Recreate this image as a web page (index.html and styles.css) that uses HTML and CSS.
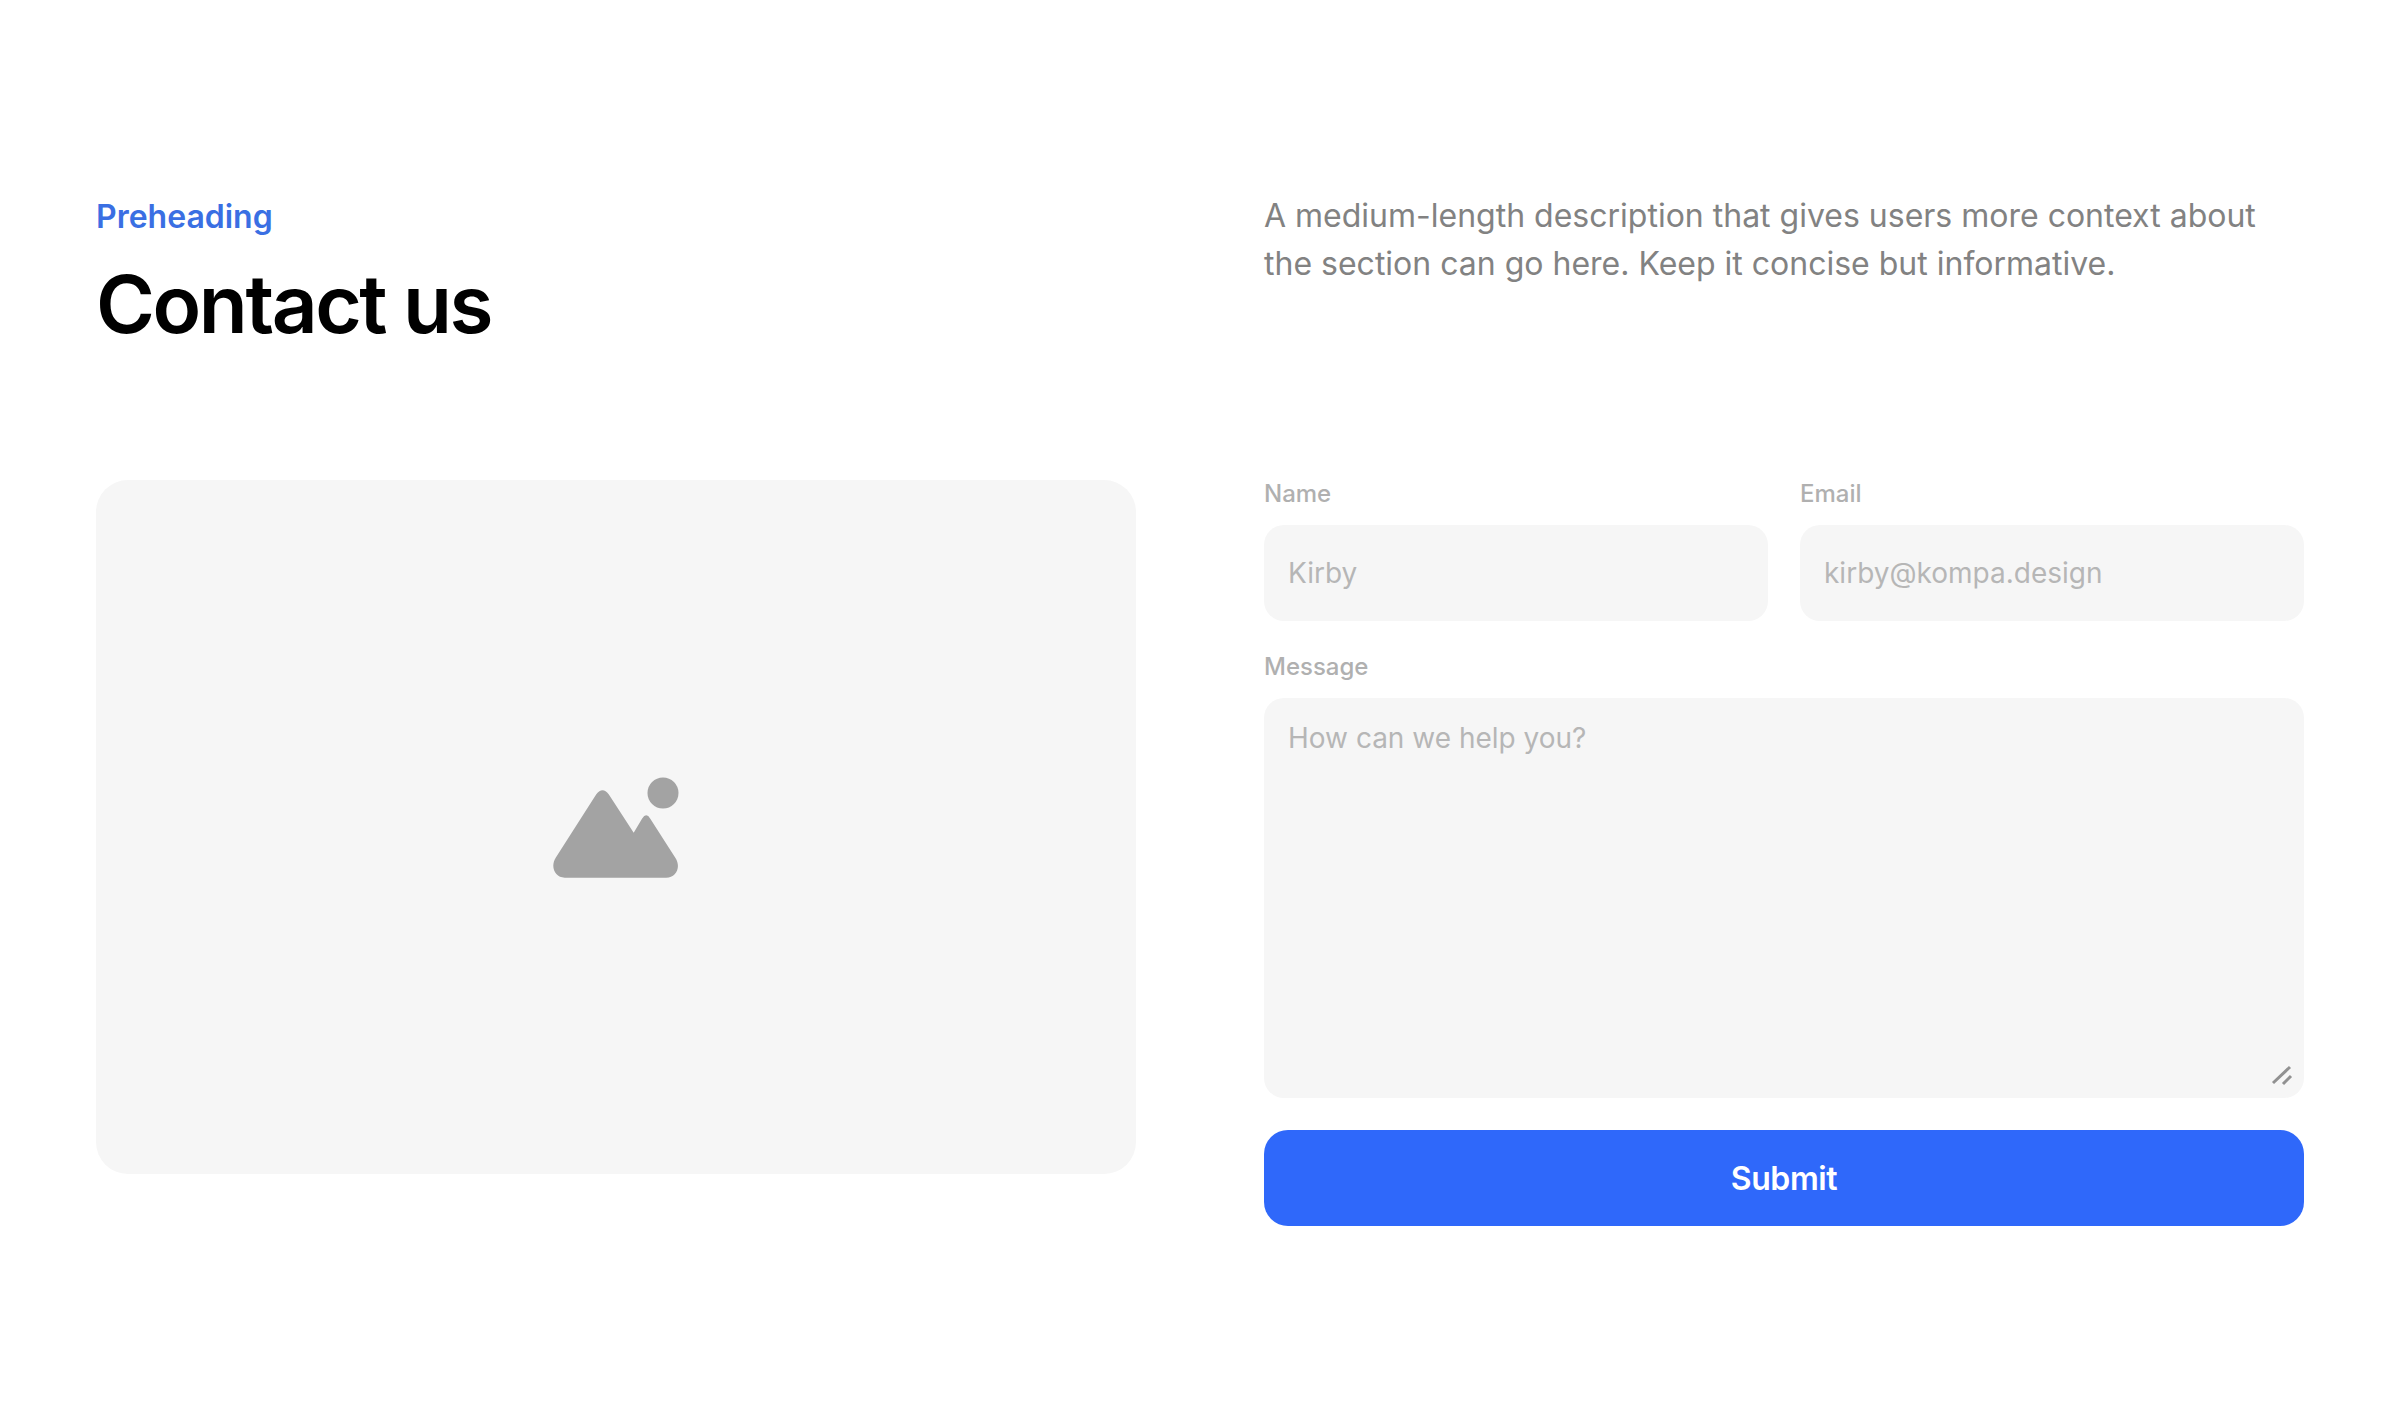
FILE: index.html
```html
<html>

<head>
    <link rel="stylesheet" href="styles.css">
</head>

<body>
    <div class="header">
        <div class="titles">
            <div class="pre">Preheading</div>
            <h1>Contact us</h1>
        </div>
        <p class="desc">A medium-length description that gives users more context about the section can go here. Keep it concise but informative.</p>
    </div>
    <div class="content">
        <div class="picture">
            <svg width="126" height="101" viewBox="0 0 126 101">
                <circle cx="110" cy="16" r="15.5" fill="#a3a3a3"></circle>
                <path fill="#a3a3a3" d="M43.3 17.3Q49.5 9.3 55.7 17.3L80.7 55.7L89 41.7Q93.3 35 97.3 41.7L122.3 80.7C128.5 90 123 100.7 113.3 100.7L11.7 100.7C2 100.7 -3 90 2.7 80.7Z"></path>
            </svg>
        </div>
        <form class="form">
            <div class="row">
                <div class="field">
                    <label for="name">Name</label>
                    <input type="text" id="name" placeholder="Kirby">
                </div>
                <div class="field">
                    <label for="email">Email</label>
                    <input type="text" id="email" placeholder="kirby@kompa.design">
                </div>
            </div>
            <div class="field">
                <label for="message">Message</label>
                <div class="area">
                    <textarea id="message" placeholder="How can we help you?"></textarea>
                    <svg class="grip" width="24" height="24" viewBox="0 0 24 24">
                        <path d="M3 20L20 4M13 21L21 13" stroke="#919191" stroke-width="3" fill="none"></path>
                    </svg>
                </div>
            </div>
            <input type="button" class="submit" value="Submit">
        </form>
    </div>
</body>

</html>
```

FILE: styles.css
```css
* {
    box-sizing: border-box;
}
body {
    margin: 0;
    padding: 192px 96px 0 96px;
    background-color: #fff;
    font-family: Inter, sans-serif;
}
.header {
    display: flex;
    gap: 128px;
    height: 288px;
}
.titles, .desc {
    flex: 1;
}
.pre {
    padding-top: 1px;
    color: #3a6fe3;
    font-size: 32px;
    font-weight: 600;
    line-height: 48px;
}
h1 {
    margin: 19px 0 0 0;
    color: #000;
    font-size: 80px;
    font-weight: 600;
    letter-spacing: -2.4px;
    line-height: 88px;
}
.desc {
    margin: 0;
    color: #828282;
    font-size: 32px;
    line-height: 48px;
}
.content {
    display: flex;
    gap: 128px;
}
.picture {
    flex: 1;
    height: 694px;
    display: flex;
    align-items: center;
    justify-content: center;
    background-color: #f6f6f6;
    border-radius: 32px;
}
.form {
    flex: 1;
    display: flex;
    flex-direction: column;
    gap: 32px;
}
.row {
    display: flex;
    gap: 32px;
}
.row .field {
    flex: 1;
}
label {
    display: block;
    height: 45px;
    color: #b0b0b0;
    font-size: 24px;
    font-weight: 500;
    line-height: 28px;
}
input[type=text], textarea {
    display: block;
    width: 100%;
    border: 0;
    outline: none;
    padding: 0 24px;
    background-color: #f6f6f6;
    border-radius: 20px;
    color: #b6b6b6;
    font-family: Inter, sans-serif;
    font-size: 28px;
}
input[type=text] {
    height: 96px;
}
input::placeholder, textarea::placeholder {
    color: #b6b6b6;
    opacity: 1;
}
.area {
    position: relative;
}
textarea {
    height: 400px;
    padding: 20px 24px;
    line-height: 40px;
    resize: none;
}
.grip {
    position: absolute;
    right: 10px;
    bottom: 11px;
}
.submit {
    height: 96px;
    border: 0;
    border-radius: 24px;
    background-color: #2f68fa;
    color: #fff;
    font-family: Inter, sans-serif;
    font-size: 32px;
    font-weight: 600;
    letter-spacing: -0.4px;
}
```
